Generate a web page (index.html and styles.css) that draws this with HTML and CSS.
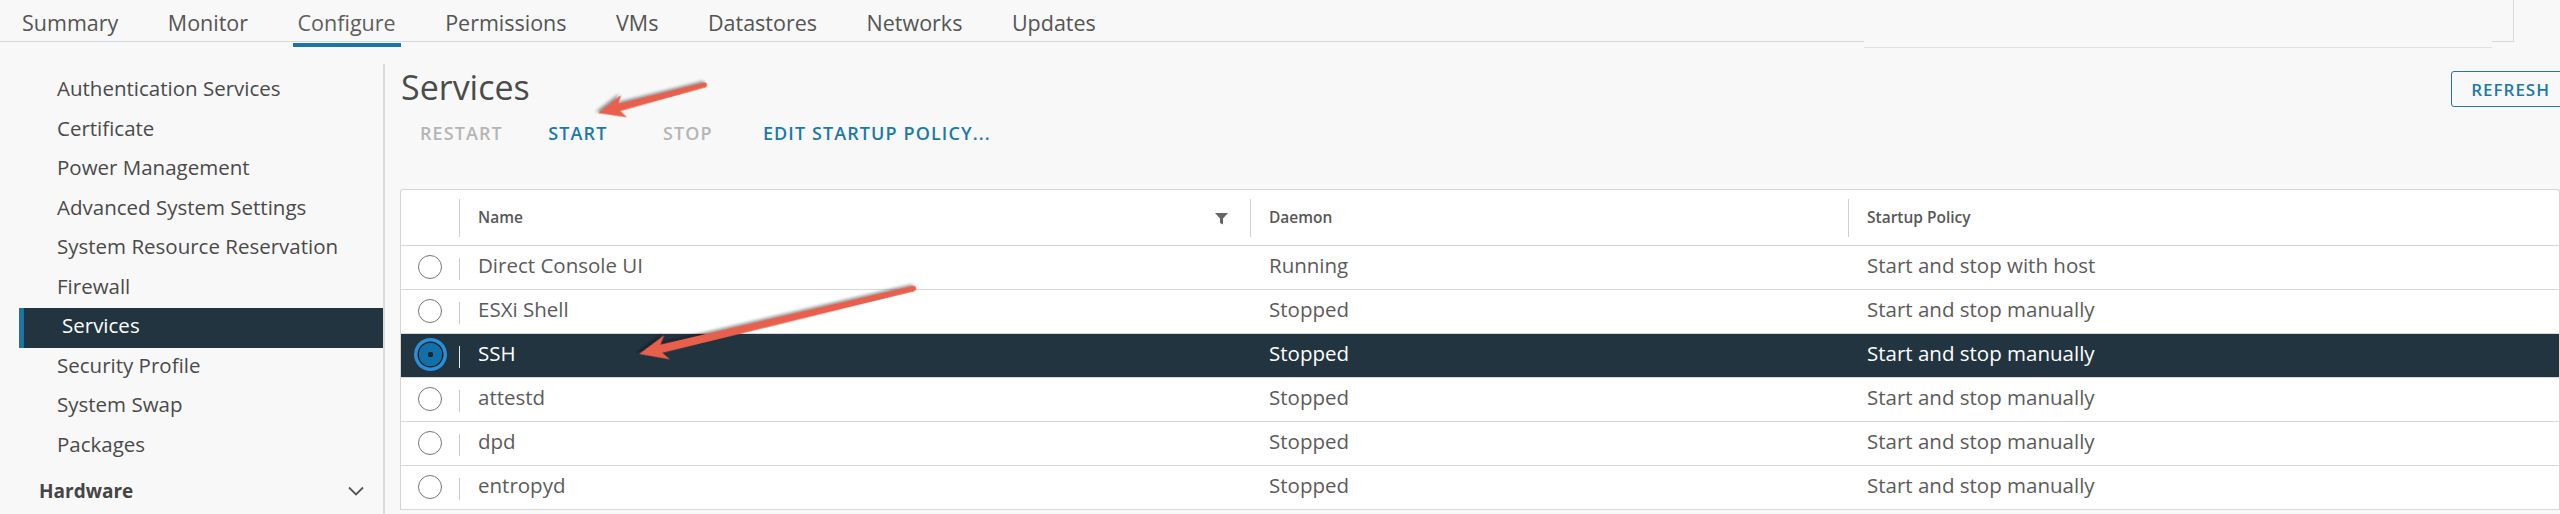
FILE: index.html
```html
<!DOCTYPE html>
<html lang="en">
<head>
<meta charset="UTF-8">
<meta name="viewport" content="width=device-width, initial-scale=1.0"/>
<title>Host - Configure - Services</title>
<link rel="stylesheet" href="styles.css">
</head>
<body>

<nav class="tabs">
  <a class="tab">Summary</a>
  <a class="tab">Monitor</a>
  <a class="tab active">Configure</a>
  <a class="tab">Permissions</a>
  <a class="tab">VMs</a>
  <a class="tab">Datastores</a>
  <a class="tab">Networks</a>
  <a class="tab">Updates</a>
  <div class="tabs-extra"></div>
</nav>

<div class="page">
  <!-- left navigation -->
  <aside class="sidebar">
    <ul class="side-list">
      <li>Authentication Services</li>
      <li>Certificate</li>
      <li>Power Management</li>
      <li>Advanced System Settings</li>
      <li>System Resource Reservation</li>
      <li>Firewall</li>
      <li class="active">Services</li>
      <li>Security Profile</li>
      <li>System Swap</li>
      <li>Packages</li>
    </ul>
    <div class="side-group">
      <span>Hardware</span>
      <svg width="16" height="10" viewBox="0 0 16 10"><polyline points="1,1.5 8,8.5 15,1.5" fill="none" stroke="#555" stroke-width="1.8"/></svg>
    </div>
  </aside>

  <main class="content">
    <div class="content-head">
      <h1>Services</h1>
      <button class="btn-outline">REFRESH</button>
    </div>

    <div class="toolbar">
      <button class="btn-flat" disabled>RESTART</button>
      <button class="btn-flat">START</button>
      <button class="btn-flat" disabled>STOP</button>
      <button class="btn-flat">EDIT STARTUP POLICY...</button>
    </div>

    <div class="datagrid">
      <div class="dg-head">
        <div class="th th-select"></div>
        <div class="th th-name">
          <span>Name</span>
          <svg class="filter-icon" width="13" height="13" viewBox="0 0 13 13"><path d="M0 1h13l-5 5.5v6l-3-1.5v-4.5z" fill="#666"/></svg>
        </div>
        <div class="th">Daemon</div>
        <div class="th">Startup Policy</div>
      </div>
      <div id="rows"></div>
    </div>
  </main>
</div>

<!-- red annotation arrows -->
<svg class="annotations" width="2560" height="514" viewBox="0 0 2560 514">
  <g class="arrow" transform="translate(598,113) rotate(165.3)">
    <polygon points="0,0 -27,-11.5 -22,-3.8 -110,-2.6 -110,2.6 -22,3.8 -27,11.5"/>
    <circle cx="-110" cy="0" r="2.6"/>
  </g>
  <g class="arrow" transform="translate(639,354) rotate(166.6)">
    <polygon points="0,0 -29,-12.5 -23,-4.2 -282,-2.8 -282,2.8 -23,4.2 -29,12.5"/>
    <circle cx="-282" cy="0" r="2.8"/>
  </g>
</svg>

<script>
  const services = [
    { name: 'Direct Console UI', daemon: 'Running', policy: 'Start and stop with host' },
    { name: 'ESXi Shell', daemon: 'Stopped', policy: 'Start and stop manually' },
    { name: 'SSH', daemon: 'Stopped', policy: 'Start and stop manually', selected: true },
    { name: 'attestd', daemon: 'Stopped', policy: 'Start and stop manually' },
    { name: 'dpd', daemon: 'Stopped', policy: 'Start and stop manually' },
    { name: 'entropyd', daemon: 'Stopped', policy: 'Start and stop manually' }
  ];

  let rowsHTML = '';
  services.forEach(s => {
    rowsHTML += `
      <div class="dg-row${s.selected ? ' selected' : ''}">
        <div class="td td-select"><span class="radio"></span></div>
        <div class="td td-name">${s.name}</div>
        <div class="td">${s.daemon}</div>
        <div class="td">${s.policy}</div>
      </div>
    `;
  });
  document.getElementById('rows').innerHTML = rowsHTML;
</script>
</body>
</html>
```

FILE: styles.css
```css
html, body {
  margin: 0;
  overflow: hidden;
}
body {
  font-family: "Open Sans", "Noto Sans", sans-serif;
  background: #f8f8f8;
  color: #565656;
  min-height: 514px;
}

/* top tabs */
.tabs {
  display: flex;
  align-items: flex-start;
  height: 41px;
  padding-left: 17px;
  margin-right: 46px;
  border-bottom: 1px solid #d3dadd;
  border-right: 1px solid #d3dadd;
}
.tab {
  padding: 8px 5px 6px;
  margin-right: 39.5px;
  font-size: 21.5px;
  line-height: 29px;
  color: #555;
  border-bottom: 4px solid transparent;
  flex-shrink: 0;
}
.tab.active {
  color: #5e5e5e;
  border-bottom-color: #1a76a6;
}
.tabs-extra {
  margin-left: auto;
  margin-right: 21px;
  width: 628px;
  height: 47px;
  flex-shrink: 0;
  background: #f8f8f8;
  border-bottom: 1px solid #dde2e4;
}

.page {
  display: flex;
  min-height: 472px;
}

/* sidebar */
.sidebar {
  width: 364px;
  flex-shrink: 0;
  margin-top: 22px;
  padding: 7px 0 0 19px;
  border-right: 2px solid #dcdcdc;
}
.side-list {
  list-style: none;
  margin: 0;
  padding: 0;
}
.side-list li {
  padding: 0 0 5px 38px;
  line-height: 34.5px;
  font-size: 20.5px;
  color: #4a4a4a;
  white-space: nowrap;
}
.side-list li.active {
  background: #22343f;
  color: #fff;
  border-left: 5px solid #1d74a4;
}
.side-group {
  display: flex;
  justify-content: space-between;
  align-items: center;
  margin-top: 9.5px;
  padding: 0 19px 0 20px;
  line-height: 30px;
  font-size: 19px;
  font-weight: 700;
  color: #454545;
}

/* main content */
.content {
  flex: 1;
  min-width: 0;
  padding: 25px 0 0 15px;
}
.content-head {
  display: flex;
  justify-content: space-between;
  align-items: flex-start;
}
.content-head h1 {
  margin: 0;
  padding-left: 1px;
  font-size: 34px;
  line-height: 40px;
  font-weight: 400;
  color: #4b4b4b;
}
.btn-outline {
  margin-top: 4px;
  margin-right: -10px;
  height: 36px;
  padding: 0 19px;
  font: 600 17px "Open Sans", sans-serif;
  letter-spacing: 1px;
  color: #1b7aa8;
  background: transparent;
  border: 1px solid #1b7aa8;
  border-radius: 3px;
}

.toolbar {
  display: flex;
  margin-top: 8px;
}
.btn-flat {
  min-width: 110px;
  height: 36px;
  padding: 0 20px;
  font: 600 18px "Open Sans", sans-serif;
  letter-spacing: 1.1px;
  color: #1b7aa8;
  background: none;
  border: 0;
  text-align: center;
  white-space: nowrap;
}
.btn-flat:disabled {
  color: #b5b5b5;
}

/* data grid */
.datagrid {
  margin-top: 38px;
  background: #fff;
  border: 1px solid #d5d5d5;
  border-bottom: 0;
  border-radius: 3px 3px 0 0;
}
.dg-head, .dg-row {
  display: grid;
  grid-template-columns: 58px 791px 598px 1fr;
}
.dg-head {
  height: 55px;
  border-bottom: 1px solid #d5d5d5;
}
.th {
  padding: 9px 0 0 19px;
  line-height: 36px;
  font-size: 15.5px;
  font-weight: 600;
  color: #575757;
  background: linear-gradient(#cfcfcf, #cfcfcf) 0 9px / 1px 38px no-repeat;
}
.th-select {
  background: none;
}
.th-name {
  display: flex;
  justify-content: space-between;
  align-items: flex-start;
  padding-right: 22px;
}
.filter-icon {
  margin-top: 13px;
}

.dg-row {
  height: 43px;
  border-bottom: 1px solid #d8d8d8;
}
.td {
  padding: 0 0 5px 19px;
  line-height: 38px;
  font-size: 20.5px;
  color: #5b5b5b;
  white-space: nowrap;
}
.td-name {
  background: linear-gradient(#c8c8c8, #c8c8c8) 0 12px / 1px 22px no-repeat;
}
.td-select {
  display: flex;
  justify-content: center;
  align-items: center;
  padding: 0 0 2px;
}
.radio {
  width: 22px;
  height: 22px;
  border: 1.5px solid #767676;
  border-radius: 50%;
  background: #fff;
}

.dg-row.selected {
  background: #22343f;
}
.dg-row.selected .td {
  color: #fff;
}
.dg-row.selected .td-name {
  background-image: linear-gradient(#e4e9ec, #e4e9ec);
}
.dg-row.selected .radio {
  width: 23px;
  height: 23px;
  border: 0;
  background: radial-gradient(circle, #17262f 0 2.5px, #1270a8 3px);
  box-shadow: 0 0 0 1.5px #14232c, 0 0 0 5px #2a8fd8;
}

/* annotations */
.annotations {
  position: absolute;
  top: 0;
  left: 0;
  pointer-events: none;
}
.arrow {
  fill: #e8604c;
  filter: drop-shadow(2px 2px 1.5px rgba(0,0,0,0.4));
}
```
